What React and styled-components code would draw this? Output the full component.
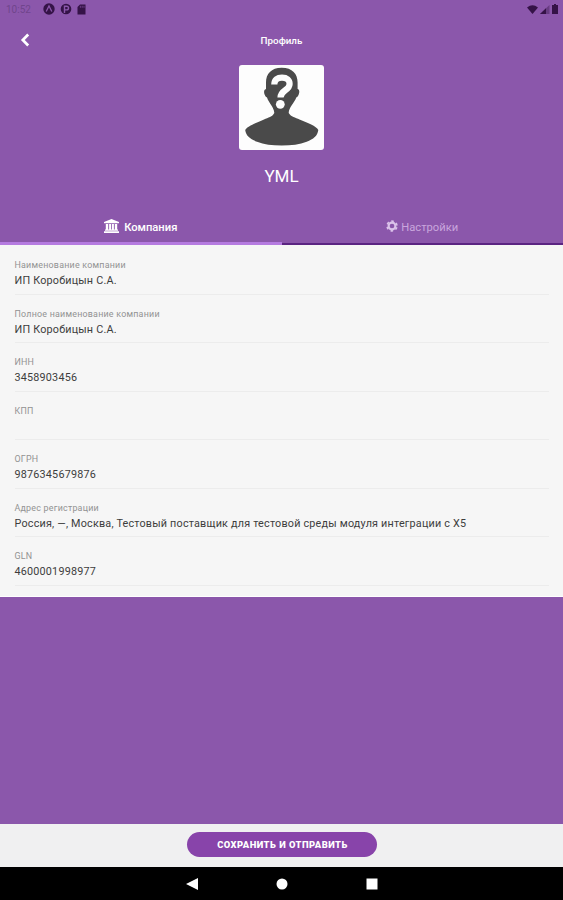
import styled, { createGlobalStyle } from 'styled-components';
import { useState } from 'react';

/* ──────────────────────────  STYLES  ────────────────────────── */
const GlobalStyle = createGlobalStyle`
  * {
    box-sizing: border-box;
  }

  body {
    margin: 0;
    font-family: Roboto, "Liberation Sans", sans-serif;
  }
`;

const Screen = styled.div`
  display: flex;
  flex-direction: column;
  width: 563px;
  height: 900px;
  overflow: hidden;
  background-color: #8b57ab;
`;

const StatusBar = styled.div`
  display: flex;
  justify-content: space-between;
  height: 20px;
  padding: 3px 5px 0 6px;
  color: #351347;
`;

const StatusGroup = styled.div`
  display: flex;
  align-items: center;
  gap: ${(props) => props.$gap || 0}px;
  height: 12px;
`;

const Clock = styled.span`
  width: 25px;
  margin-right: 7px;
  font-size: 10px;
  color: #70458c;
`;

const Header = styled.header`
  display: grid;
  grid-template-columns: 50px 1fr 50px;
  align-items: center;
  height: 42px;
  color: #fff;
`;

const BackButton = styled.button`
  display: flex;
  width: 50px;
  padding: 0 0 2px 20px;
  border: 0;
  background: none;
  color: inherit;
`;

const Title = styled.h1`
  margin: 0;
  font-size: 9.8px;
  font-weight: 500;
  line-height: 14px;
  text-align: center;
`;

const Profile = styled.section`
  display: flex;
  flex-direction: column;
  align-items: center;
  height: 147px;
  padding-top: 3px;
`;

const Avatar = styled.div`
  width: 85px;
  height: 85px;
  border-radius: 3px;
  background-color: #fdfdfd;
  overflow: hidden;
`;

const UserName = styled.div`
  margin-top: 16px;
  font-size: 17px;
  line-height: 20px;
  color: #fff;
`;

const Tabs = styled.div`
  display: flex;
  height: 36px;
`;

const Tab = styled.button`
  display: flex;
  flex: 1;
  align-items: center;
  justify-content: center;
  gap: ${(props) => props.$gap}px;
  padding: 3px 0 0;
  border: 0;
  border-bottom: ${(props) => (props.$active ? '3px solid #b57be0' : '2px solid #5b2482')};
  background: none;
  color: ${(props) => (props.$active ? '#fff' : '#c9a6dd')};
  font-family: inherit;
  font-size: 11.2px;
  font-weight: ${(props) => (props.$active ? 500 : 400)};

  svg {
    margin-bottom: 3px;
  }
`;

const Panel = styled.main`
  height: 352px;
  padding: 1px 14px 0 14.5px;
  background-color: #f6f6f6;
  border-bottom: 1px solid #fff;
`;

const Field = styled.div`
  height: 48.5px;
  padding-top: 13px;
  border-bottom: 1px solid #ececec;
`;

const FieldLabel = styled.div`
  font-size: 8.9px;
  line-height: 12px;
  letter-spacing: 0.23px;
  color: #929292;
`;

const FieldValue = styled.div`
  margin-top: 2px;
  font-size: 10.8px;
  line-height: 15px;
  letter-spacing: 0.2px;
  white-space: nowrap;
  color: #3d3d3d;
`;

const Footer = styled.footer`
  display: flex;
  align-items: center;
  justify-content: center;
  height: 43px;
  margin-top: auto;
  padding-bottom: 3px;
  background-color: #f0f0f1;
`;

const SaveButton = styled.button`
  width: 190px;
  height: 25px;
  padding: 0 0 0 2px;
  border: 0;
  border-radius: 13px;
  background-color: #8844aa;
  color: #fff;
  font-family: inherit;
  font-size: 9.4px;
  font-weight: 900;
  letter-spacing: 0.48px;
`;

const NavBar = styled.nav`
  display: flex;
  align-items: center;
  justify-content: center;
  gap: 78px;
  height: 33px;
  background-color: #000;
  color: #fff;
`;

/* ──────────────────────────  ICONS  ────────────────────────── */
const AppIcon = () => (
  <svg width="12" height="12" viewBox="0 0 12 12">
    <circle cx="6" cy="6" r="5.7" fill="currentColor" />
    <path d="M3.2 8.5 6 3l2.8 5.5" fill="none" stroke="#8b57ab" strokeWidth="1.3" />
  </svg>
);

const ParkingIcon = () => (
  <svg width="12" height="12" viewBox="0 0 12 12">
    <circle cx="6" cy="6" r="5.3" fill="currentColor" />
    <path d="M4.5 10V3.2h2.2a1.8 1.8 0 0 1 0 3.7H5" fill="none" stroke="#8b57ab" strokeWidth="1.4" />
  </svg>
);

const CardIcon = () => (
  <svg width="9" height="11" viewBox="0 0 9 11">
    <path d="M3 .5h5.5v10H.5V3z" fill="currentColor" />
    <path d="M3.4 1.8v2M5.2 1.8v2M7 1.8v2" stroke="#8b57ab" strokeWidth=".6" />
  </svg>
);

const WifiIcon = () => (
  <svg width="11" height="9" viewBox="0 0 11 9">
    <path d="M0 2.4Q5.5-2 11 2.4L5.5 9z" fill="currentColor" />
  </svg>
);

const SignalIcon = () => (
  <svg width="10" height="9" viewBox="0 0 10 9">
    <path d="M0 9 9.5 0v9z" fill="currentColor" opacity=".4" />
    <path d="M0 9l6-5.7V9z" fill="currentColor" />
  </svg>
);

const BatteryIcon = () => (
  <svg width="6" height="10" viewBox="0 0 6 10">
    <path d="M0 1h2V0h2v1h2v9H0z" fill="currentColor" />
  </svg>
);

const BackIcon = () => (
  <svg width="10" height="14" viewBox="0 0 10 14">
    <path d="M8.2 1.5 2.8 7l5.4 5.5" fill="none" stroke="currentColor" strokeWidth="2.7" />
  </svg>
);

const AvatarIcon = () => (
  <svg width="85" height="85" viewBox="0 0 85 85">
    <path
      d="M42.7 2.7C32 2.7 26.8 9 27 18v6c-2 .5-2.400 3-1.400 5.500.5 1.700 1.400 2.500 2.400 3C30 38.500 35 42 35.300 48c-2 4-6 4.500-10.300 6.500C17 58 8 61 6.200 65c.8 6 5 9 11.800 11.700 7 2.800 15 3.800 24.700 3.800s18-1 25-3.800C74.500 74 78.500 71 79.300 65 77.500 61 68.500 58 60.500 54.500 56.500 52.500 52 52 49.700 48c.3-6 5.300-9.500 7.600-15.500 1-.5 1.900-1.300 2.400-3 1-2.500.8-5-1.100-5.500v-6c.2-9-5-15.300-15.900-15.300z"
      fill="#4a4a4a"
    />
    <path
      d="M35.300 19.600C35.300 14.500 38.500 12.700 43 12.700c5 0 7.600 2.300 7.600 6.200 0 6.700-8.800 5.700-9.100 13.600"
      fill="none"
      stroke="#fdfdfd"
      strokeWidth="6.200"
    />
    <circle cx="41.300" cy="39.300" r="4.400" fill="#fdfdfd" />
  </svg>
);

const BankIcon = () => (
  <svg width="15" height="14" viewBox="0 0 15 14">
    <path
      d="M7.500 0 15 3v1.300H0V3zM1.800 5h2.400v5.600h.9V5h2v5.600h.8V5h2v5.600h.9V5h2.400v5.600h.8v1.100H1v-1.100h.8zM0 12.200h15V14H0z"
      fill="currentColor"
    />
  </svg>
);

const GearIcon = () => (
  <svg width="12" height="12" viewBox="0 0 12 12">
    <g fill="none" stroke="#dbc2ea">
      <circle cx="6" cy="6" r="3.400" strokeWidth="2.100" />
      <circle cx="6" cy="6" r="4.900" strokeWidth="1.700" strokeDasharray="2.500 2.631" strokeDashoffset="-1.300" />
    </g>
  </svg>
);

/* ──────────────────────────  COMPONENT  ────────────────────────── */
const fields = [
  { label: 'Наименование компании', value: 'ИП Коробицын С.А.' },
  { label: 'Полное наименование компании', value: 'ИП Коробицын С.А.' },
  { label: 'ИНН', value: '3458903456' },
  { label: 'КПП', value: '' },
  { label: 'ОГРН', value: '9876345679876' },
  {
    label: 'Адрес регистрации',
    value: 'Россия, —, Москва, Тестовый поставщик для тестовой среды модуля интеграции с X5',
  },
  { label: 'GLN', value: '4600001998977' },
];

const App = () => {
  const [tab, setTab] = useState('company');

  return (
    <Screen>
      <GlobalStyle />
      <StatusBar>
        <StatusGroup $gap={5}>
          <Clock>10:52</Clock>
          <AppIcon />
          <ParkingIcon />
          <CardIcon />
        </StatusGroup>
        <StatusGroup $gap={2}>
          <WifiIcon />
          <SignalIcon />
          <BatteryIcon />
        </StatusGroup>
      </StatusBar>

      <Header>
        <BackButton aria-label="Назад">
          <BackIcon />
        </BackButton>
        <Title>Профиль</Title>
      </Header>

      <Profile>
        <Avatar>
          <AvatarIcon />
        </Avatar>
        <UserName>YML</UserName>
      </Profile>

      <Tabs>
        <Tab $active={tab === 'company'} $gap={5} onClick={() => setTab('company')}>
          <BankIcon />
          Компания
        </Tab>
        <Tab $active={tab === 'settings'} $gap={3} onClick={() => setTab('settings')}>
          <GearIcon />
          Настройки
        </Tab>
      </Tabs>

      <Panel>
        {fields.map((field) => (
          <Field key={field.label}>
            <FieldLabel>{field.label}</FieldLabel>
            <FieldValue>{field.value}</FieldValue>
          </Field>
        ))}
      </Panel>

      <Footer>
        <SaveButton>СОХРАНИТЬ И ОТПРАВИТЬ</SaveButton>
      </Footer>

      <NavBar>
        <svg width="12" height="12" viewBox="0 0 12 12">
          <path d="M12 0v12L0 6z" fill="currentColor" />
        </svg>
        <svg width="12" height="12" viewBox="0 0 12 12">
          <circle cx="6" cy="6" r="5.500" fill="currentColor" />
        </svg>
        <svg width="12" height="12" viewBox="0 0 12 12">
          <path d="M.5.5h11v11H.5z" fill="currentColor" />
        </svg>
      </NavBar>
    </Screen>
  );
};

export default App;
